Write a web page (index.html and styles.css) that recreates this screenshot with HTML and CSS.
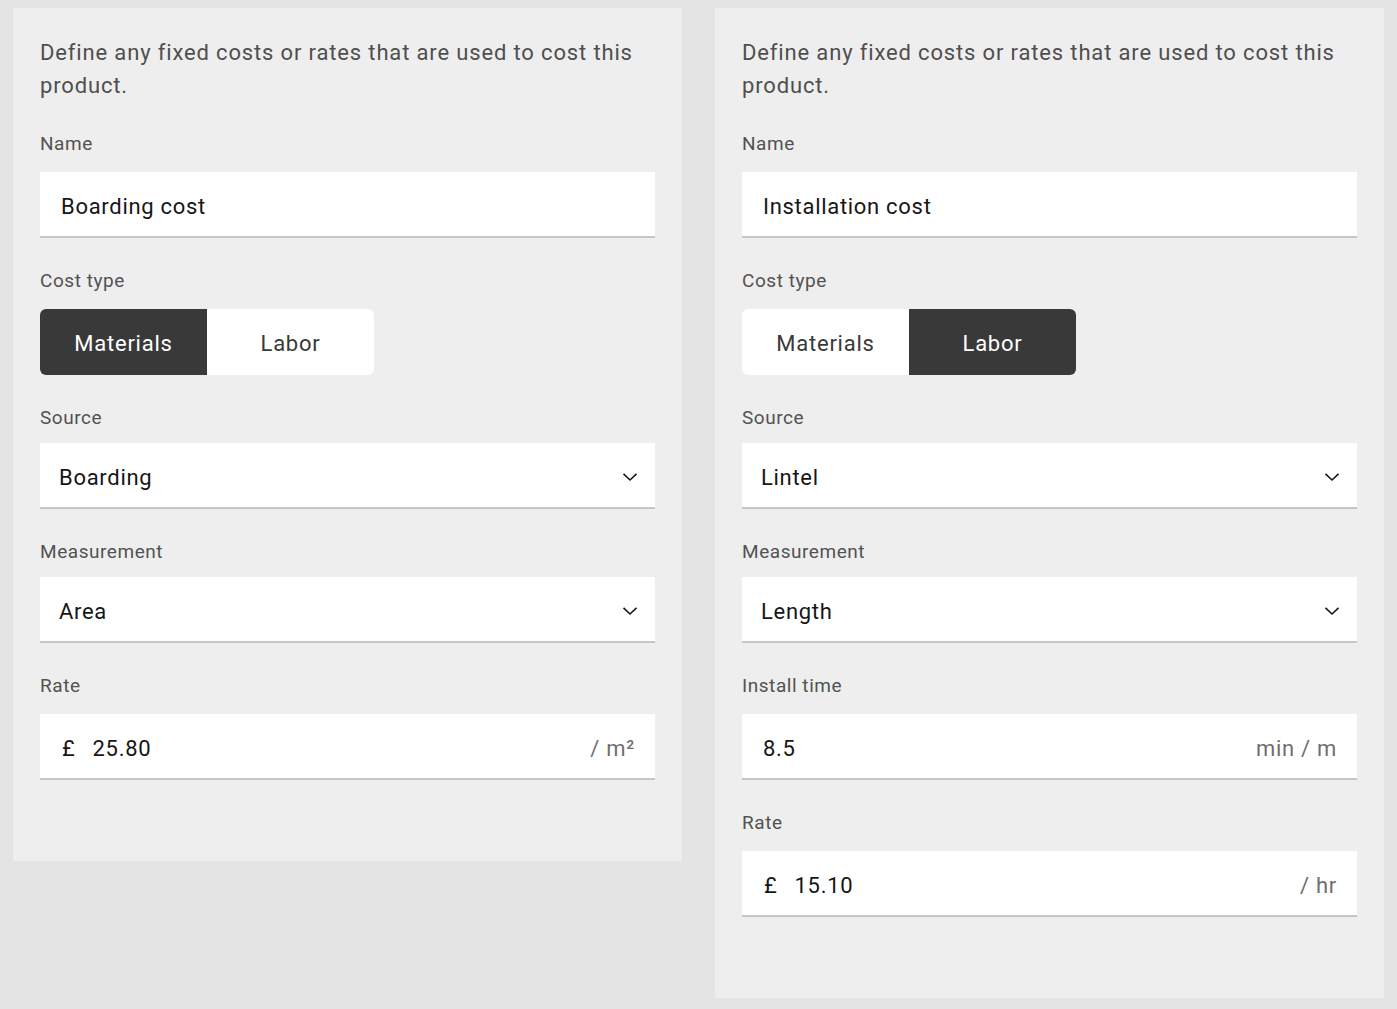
FILE: index.html
```html
<!DOCTYPE html>
<html lang="en">
<head>
<meta charset="utf-8">
<title>Costs</title>
<link rel="stylesheet" href="styles.css">
</head>
<body>
<div class="page">
  <section class="panel">
    <p class="intro">Define any fixed costs or rates that are used to cost this product.</p>
    <div class="field">
      <div class="label">Name</div>
      <div class="input"><span class="value text">Boarding cost</span></div>
    </div>
    <div class="field">
      <div class="label">Cost type</div>
      <div class="segmented">
        <div class="seg active">Materials</div>
        <div class="seg">Labor</div>
      </div>
    </div>
    <div class="field">
      <div class="label label-select">Source</div>
      <div class="input select"><span class="value">Boarding</span>
        <svg class="chev" width="16" height="10" viewBox="0 0 16 10"><path d="M1.5 1.8 L8 8 L14.5 1.8" fill="none" stroke="#161616" stroke-width="1.6"/></svg>
      </div>
    </div>
    <div class="field">
      <div class="label label-select">Measurement</div>
      <div class="input select"><span class="value">Area</span>
        <svg class="chev" width="16" height="10" viewBox="0 0 16 10"><path d="M1.5 1.8 L8 8 L14.5 1.8" fill="none" stroke="#161616" stroke-width="1.6"/></svg>
      </div>
    </div>
    <div class="field">
      <div class="label">Rate</div>
      <div class="input num"><span class="prefix">£</span><span class="value grow">25.80</span><span class="suffix">/ m²</span></div>
    </div>
  </section>

  <section class="panel">
    <p class="intro">Define any fixed costs or rates that are used to cost this product.</p>
    <div class="field">
      <div class="label">Name</div>
      <div class="input"><span class="value text">Installation cost</span></div>
    </div>
    <div class="field">
      <div class="label">Cost type</div>
      <div class="segmented">
        <div class="seg">Materials</div>
        <div class="seg active">Labor</div>
      </div>
    </div>
    <div class="field">
      <div class="label label-select">Source</div>
      <div class="input select"><span class="value">Lintel</span>
        <svg class="chev" width="16" height="10" viewBox="0 0 16 10"><path d="M1.5 1.8 L8 8 L14.5 1.8" fill="none" stroke="#161616" stroke-width="1.6"/></svg>
      </div>
    </div>
    <div class="field">
      <div class="label label-select">Measurement</div>
      <div class="input select"><span class="value">Length</span>
        <svg class="chev" width="16" height="10" viewBox="0 0 16 10"><path d="M1.5 1.8 L8 8 L14.5 1.8" fill="none" stroke="#161616" stroke-width="1.6"/></svg>
      </div>
    </div>
    <div class="field">
      <div class="label">Install time</div>
      <div class="input num"><span class="value grow text">8.5</span><span class="suffix">min / m</span></div>
    </div>
    <div class="field">
      <div class="label">Rate</div>
      <div class="input num"><span class="prefix">£</span><span class="value grow">15.10</span><span class="suffix">/ hr</span></div>
    </div>
  </section>
</div>
</body>
</html>
```

FILE: styles.css
```css
* { box-sizing: border-box; }
html, body { margin: 0; padding: 0; }
body {
  background: #e4e4e4;
  font-family: Roboto, "Noto Sans", Arial, sans-serif;
  color: #161616;
}
.page {
  display: flex;
  align-items: flex-start;
  gap: 33px;
  padding: 8px 13px;
}
.panel {
  width: 669px;
  background: #eeeeee;
  padding: 27px 27px 81px 27px;
}
.intro {
  margin: 0;
  padding-top: 1px;
  font-size: 22px;
  line-height: 33px;
  color: #4f4f4f;
  letter-spacing: 0.85px;
}
.field { margin-top: 30px; }
.intro + .field { margin-top: 29px; }
.label {
  font-size: 19px;
  line-height: 24px;
  padding-top: 1px;
  color: #525252;
  letter-spacing: 0.55px;
  margin-bottom: 16px;
}
.label.label-select { margin-bottom: 13px; }
.input {
  height: 66px;
  background: #ffffff;
  border-bottom: 2px solid #c6c6c6;
  display: flex;
  align-items: center;
  padding: 4px 20px 0 19px;
  font-size: 22px;
  letter-spacing: 0.7px;
}
.input .value.text { padding-left: 2px; }
.input .grow { flex: 1; }
.prefix { margin-left: 3px; margin-right: 17px; }
.suffix { color: #6f6f6f; }
.select { justify-content: space-between; padding-right: 17px; }
.chev { display: block; }
.segmented {
  display: flex;
  width: 334px;
  height: 66px;
  border-radius: 6px;
  overflow: hidden;
  background: #ffffff;
}
.seg {
  flex: 1;
  display: flex;
  align-items: center;
  justify-content: center;
  padding-top: 2px;
  font-size: 22px;
  letter-spacing: 0.75px;
  color: #393939;
}
.seg.active {
  background: #393939;
  color: #ffffff;
}
```
